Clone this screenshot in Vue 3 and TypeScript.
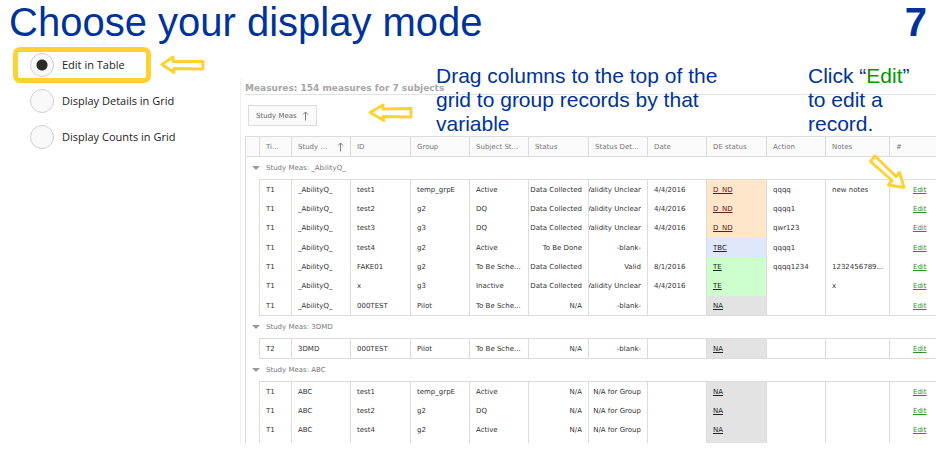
<script setup lang="ts">
import { ref } from 'vue'

interface Column {
  label: string
  width: number
  sorted?: boolean
}

interface Measure {
  time: string
  study: string
  id: string
  group: string
  subject: string
  status: string
  detail: string
  date: string
  de: string
  action: string
  notes: string
}

interface Group {
  name: string
  rows: Measure[]
  continues?: boolean
}

const modes = ['Edit in Table', 'Display Details in Grid', 'Display Counts in Grid']
const mode = ref(modes[0])

const columns: Column[] = [
  { label: '', width: 13 },
  { label: 'Ti...', width: 32 },
  { label: 'Study ...', width: 59, sorted: true },
  { label: 'ID', width: 60 },
  { label: 'Group', width: 59 },
  { label: 'Subject St...', width: 59 },
  { label: 'Status', width: 60 },
  { label: 'Status Det...', width: 59 },
  { label: 'Date', width: 59 },
  { label: 'DE status', width: 60 },
  { label: 'Action', width: 59 },
  { label: 'Notes', width: 64 },
  { label: '#', width: 47 },
]

function row(...v: string[]): Measure {
  const [time, study, id, group, subject, status, detail, date, de, action, notes] = v
  return { time, study, id, group, subject, status, detail, date, de, action, notes }
}

const groups: Group[] = [
  {
    name: '_AbilityQ_',
    rows: [
      row('T1', '_AbilityQ_', 'test1', 'temp_grpE', 'Active', 'Data Collected', 'Validity Unclear', '4/4/2016', 'D_ND', 'qqqq', 'new notes'),
      row('T1', '_AbilityQ_', 'test2', 'g2', 'DQ', 'Data Collected', 'Validity Unclear', '4/4/2016', 'D_ND', 'qqqq1', ''),
      row('T1', '_AbilityQ_', 'test3', 'g3', 'DQ', 'Data Collected', 'Validity Unclear', '4/4/2016', 'D_ND', 'qwr123', ''),
      row('T1', '_AbilityQ_', 'test4', 'g2', 'Active', 'To Be Done', '-blank-', '', 'TBC', 'qqqq1', ''),
      row('T1', '_AbilityQ_', 'FAKE01', 'g2', 'To Be Sche...', 'Data Collected', 'Valid', '8/1/2016', 'TE', 'qqqq1234', '1232456789...'),
      row('T1', '_AbilityQ_', 'x', 'g3', 'Inactive', 'Data Collected', 'Validity Unclear', '4/4/2016', 'TE', '', 'x'),
      row('T1', '_AbilityQ_', '000TEST', 'Pilot', 'To Be Sche...', 'N/A', '-blank-', '', 'NA', '', ''),
    ],
  },
  {
    name: '3DMD',
    rows: [row('T2', '3DMD', '000TEST', 'Pilot', 'To Be Sche...', 'N/A', '-blank-', '', 'NA', '', '')],
  },
  {
    name: 'ABC',
    continues: true,
    rows: [
      row('T1', 'ABC', 'test1', 'temp_grpE', 'Active', 'N/A', 'N/A for Group', '', 'NA', '', ''),
      row('T1', 'ABC', 'test2', 'g2', 'DQ', 'N/A', 'N/A for Group', '', 'NA', '', ''),
      row('T1', 'ABC', 'test4', 'g2', 'Active', 'N/A', 'N/A for Group', '', 'NA', '', ''),
    ],
  },
]
</script>

<template>
  <div class="slide">
    <header class="heading">
      <h1>Choose your display mode</h1>
      <span class="number">7</span>
    </header>

    <div class="body">
      <form class="modes">
        <label v-for="m in modes" :key="m" class="mode" :class="{ highlighted: m === modes[0] }">
          <input v-model="mode" type="radio" name="mode" :value="m" />
          <span>{{ m }}</span>
        </label>
      </form>

      <main class="panel">
        <h2>Measures: 154 measures for 7 subjects</h2>
        <div class="grouping">
          <button type="button" class="chip">
            <span>Study Meas</span>
            <svg class="sort" viewBox="0 0 7 10"><path d="M3.5 9.5V1M1 3.5L3.5 1L6 3.5" /></svg>
          </button>
        </div>

        <table>
          <colgroup>
            <col v-for="(c, i) in columns" :key="i" :style="{ width: c.width + 'px' }" />
          </colgroup>
          <thead>
            <tr>
              <th v-for="(c, i) in columns" :key="i" scope="col">
                <div class="head">
                  <span>{{ c.label }}</span>
                  <svg v-if="c.sorted" class="sort" viewBox="0 0 7 10"><path d="M3.5 9.5V1M1 3.5L3.5 1L6 3.5" /></svg>
                </div>
              </th>
            </tr>
          </thead>
          <template v-for="g in groups" :key="g.name">
            <tbody class="caption">
              <tr>
                <td colspan="13">
                  <div class="group-title">
                    <svg class="caret" viewBox="0 0 8 4"><path d="M0 0H8L4 4Z" /></svg>
                    <span>Study Meas: {{ g.name }}</span>
                  </div>
                </td>
              </tr>
            </tbody>
            <tbody class="records" :class="{ continues: g.continues }">
              <tr v-for="r in g.rows" :key="r.id">
                <td class="indent"></td>
                <td>{{ r.time }}</td>
                <td>{{ r.study }}</td>
                <td>{{ r.id }}</td>
                <td>{{ r.group }}</td>
                <td>{{ r.subject }}</td>
                <td class="end"><div>{{ r.status }}</div></td>
                <td class="end"><div>{{ r.detail }}</div></td>
                <td>{{ r.date }}</td>
                <td class="de" :class="r.de.toLowerCase()"><a href="#">{{ r.de }}</a></td>
                <td>{{ r.action }}</td>
                <td>{{ r.notes }}</td>
                <td class="edit"><a href="#">Edit</a></td>
              </tr>
              <tr v-if="g.continues" class="rest">
                <td class="indent"></td>
                <td v-for="n in 12" :key="n" :class="{ na: n === 9 }"></td>
              </tr>
            </tbody>
          </template>
        </table>
      </main>
    </div>

    <svg class="arrow pick" viewBox="0 0 46 20"><path d="M2 9.500L13 2V6.500H43V14L14 13.500L14 17.500Z" /></svg>
    <svg class="arrow drag" viewBox="0 0 46 20"><path d="M2 9.500L15 2V6L43 5.500V14L15 13.500L16 17.500Z" /></svg>
    <p class="note drag-note">Drag columns to the top of the<br />grid to group records by that<br />variable</p>
    <p class="note edit-note">Click “<em>Edit</em>”<br />to edit a<br />record.</p>
    <svg class="arrow row-edit" viewBox="0 0 38 36"><path d="M7 2L2.500 7.500L24 26.500L20.500 31L36 33.500L31.500 18.500L28 22.500Z" /></svg>
  </div>
</template>

<style>
body {
  margin: 0;
  background: #fff;
}
</style>

<style scoped>
.slide {
  position: relative;
  overflow: hidden;
  font-family: "DejaVu Sans", Verdana, sans-serif;
  font-size: 7px;
  color: #333;
}

.heading {
  display: flex;
  justify-content: space-between;
  padding: 1px 23px 4px 9px;
  font: 40px/42px "Liberation Sans", Arial, sans-serif;
  color: #039;
}

h1 {
  margin: 0;
  font: inherit;
}

.number {
  font-weight: bold;
}

.body {
  display: grid;
  grid-template-columns: 240px minmax(0, 1fr);
  align-items: start;
  padding-right: 14px;
}

.modes {
  display: flex;
  flex-direction: column;
  align-items: flex-start;
  padding-left: 13px;
}

.mode {
  display: flex;
  align-items: center;
  gap: 8px;
  box-sizing: border-box;
  width: 138px;
  height: 36px;
  border: 5px solid transparent;
  border-radius: 7px;
  padding-left: 12px;
  font: 11px/16px "Open Sans", "Segoe UI", sans-serif;
  color: #222;
  white-space: nowrap;
}

.mode.highlighted {
  border-color: #ffd232;
}

.mode input {
  flex: none;
  appearance: none;
  width: 24px;
  height: 24px;
  margin: 0;
  border: 1px solid #cfcfcf;
  border-radius: 50%;
  background: #f9f9f9;
}

.mode input:checked {
  background: radial-gradient(circle, #2a2a2a 5px, #f9f9f9 6px);
}

.panel {
  margin-top: 32px;
  padding-left: 4px;
  border-left: 1px solid #f0f0f0;
}

h2 {
  margin: 0;
  padding-top: 4px;
  border-bottom: 1px solid #e2e2e2;
  font-size: 9px;
  line-height: 11px;
  color: #a6a6a6;
}

.grouping {
  padding: 10px 3px;
}

.chip {
  display: flex;
  align-items: center;
  gap: 5px;
  box-sizing: border-box;
  height: 21px;
  padding: 0 7px;
  border: 1px solid #dcdcdc;
  background: #fafafa;
  font: inherit;
  color: #666;
}

.sort {
  flex: none;
  width: 7px;
  height: 10px;
  fill: none;
  stroke: #808080;
}

table {
  width: 100%;
  table-layout: fixed;
  border-collapse: separate;
  border-spacing: 0;
  border-left: 1px solid #dcdcdc;
}

th,
td {
  box-sizing: border-box;
  padding: 0 0 0 6px;
  border-left: 1px solid #dcdcdc;
  line-height: 10px;
  text-align: left;
  white-space: nowrap;
  overflow: hidden;
}

th {
  height: 21px;
  border-top: 1px solid #dcdcdc;
  border-bottom: 1px solid #dcdcdc;
  background: #fafafa;
  font-weight: normal;
  color: #777;
}

th:first-child,
.indent,
.caption td {
  border-left: 0;
}

.head {
  display: flex;
  align-items: center;
  justify-content: space-between;
  padding-right: 6px;
}

.caption td {
  height: 22px;
  color: #777;
}

.group-title {
  display: flex;
  align-items: center;
  gap: 6px;
}

.caret {
  width: 8px;
  height: 4px;
  fill: #999;
}

.records td {
  height: 19px;
}

.records tr:nth-child(3n) td {
  height: 20px;
}

.records tr:first-child td:not(.indent) {
  height: 20px;
  border-top: 1px solid #dcdcdc;
}

.records:not(.continues) tr:last-child td:not(.indent) {
  height: 20px;
  border-bottom: 1px solid #dcdcdc;
}

.records:not(.continues) tr:first-child:last-child td:not(.indent) {
  height: 21px;
}

.records .rest td {
  height: 3px;
}

.records .end {
  padding: 0 6px 0 0;
}

.end div {
  display: flex;
  justify-content: flex-end;
  overflow: hidden;
}

.de a {
  color: #222;
}

.d_nd {
  background: #fee6cb;
}

.d_nd a {
  color: #5a2020;
}

.tbc {
  background: #dfe7fb;
}

.te {
  background: #cfc;
}

.na {
  background: #e3e3e3;
}

.records .edit {
  padding-left: 23px;
}

.edit a {
  color: #2f8f2f;
}

.note {
  position: absolute;
  top: 64px;
  margin: 0;
  font: 21px/24px "Liberation Sans", Arial, sans-serif;
  color: #039;
  white-space: nowrap;
}

.note em {
  font-style: normal;
  color: #090;
}

.drag-note {
  left: 436px;
}

.edit-note {
  left: 808px;
}

.arrow {
  position: absolute;
  width: 46px;
  height: 20px;
  fill: #fff;
  stroke: #ffd232;
  stroke-width: 3;
  stroke-linejoin: round;
}

.pick {
  left: 160px;
  top: 55px;
}

.drag {
  left: 368px;
  top: 103px;
}

.row-edit {
  left: 868px;
  top: 154px;
  width: 38px;
  height: 36px;
}
</style>
